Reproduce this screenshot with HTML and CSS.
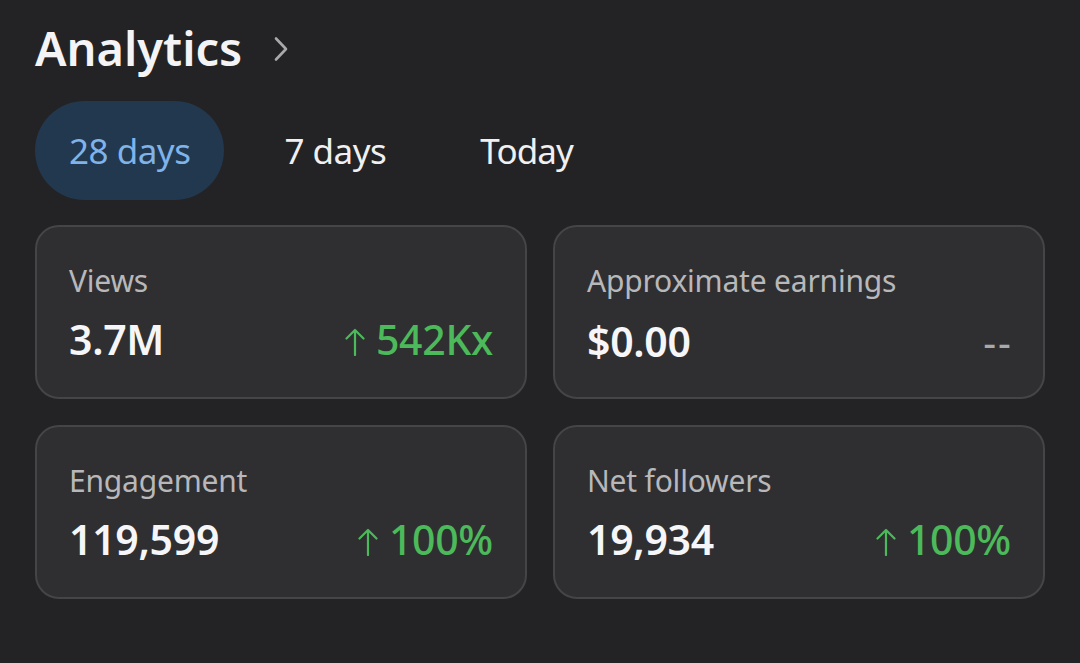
FILE: index.html
```html
<!DOCTYPE html>
<html lang="en">
<head>
<meta charset="utf-8">
<title>Analytics</title>
<link rel="stylesheet" href="styles.css">
</head>
<body>
<main class="panel">
  <header class="head">
    <h1 class="title">Analytics</h1>
    <svg class="chev" width="16" height="26" viewBox="0 0 16 26"><path d="M3 2.5 L13 13 L3 23.5" fill="none" stroke="#a9a9ad" stroke-width="2.6" stroke-linecap="round" stroke-linejoin="round"/></svg>
  </header>
  <nav class="tabs">
    <span class="tab active">28 days</span>
    <span class="tab">7 days</span>
    <span class="tab">Today</span>
  </nav>
  <section class="grid">
    <div class="card">
      <div class="label">Views</div>
      <div class="row"><span class="value">3.7M</span><span class="delta"><svg class="arrow" width="20" height="28" viewBox="0 0 20 28"><path d="M10 27 V2 M1.5 10.5 L10 2 L18.5 10.5" fill="none" stroke="#4cb95a" stroke-width="2.2" stroke-linecap="round" stroke-linejoin="round"/></svg>542Kx</span></div>
    </div>
    <div class="card">
      <div class="label">Approximate earnings</div>
      <div class="row"><span class="value">$0.00</span><span class="dash">--</span></div>
    </div>
    <div class="card">
      <div class="label">Engagement</div>
      <div class="row"><span class="value">119,599</span><span class="delta"><svg class="arrow" width="20" height="28" viewBox="0 0 20 28"><path d="M10 27 V2 M1.5 10.5 L10 2 L18.5 10.5" fill="none" stroke="#4cb95a" stroke-width="2.2" stroke-linecap="round" stroke-linejoin="round"/></svg>100%</span></div>
    </div>
    <div class="card">
      <div class="label">Net followers</div>
      <div class="row"><span class="value">19,934</span><span class="delta"><svg class="arrow" width="20" height="28" viewBox="0 0 20 28"><path d="M10 27 V2 M1.5 10.5 L10 2 L18.5 10.5" fill="none" stroke="#4cb95a" stroke-width="2.2" stroke-linecap="round" stroke-linejoin="round"/></svg>100%</span></div>
    </div>
  </section>
</main>
</body>
</html>
```
FILE: styles.css
```css
html, body {
  margin: 0;
  padding: 0;
  background: #232325;
}
body {
  font-family: "Noto Sans", "Open Sans", sans-serif;
  color: #f2f2f4;
}
.panel {
  padding: 17px 35px 0 35px;
}
.head {
  display: flex;
  align-items: center;
  gap: 31px;
  height: 62px;
}
.title {
  margin: 0;
  font-size: 47px;
  font-weight: 600;
  line-height: 62px;
  color: #f4f4f6;
  letter-spacing: 0;
}
.chev {
  display: block;
  margin-top: 1px;
}
.tabs {
  display: flex;
  gap: 26px;
  margin-top: 22px;
}
.tab {
  display: flex;
  align-items: center;
  height: 99px;
  padding: 0 34px;
  border-radius: 50px;
  font-size: 35px;
  color: #f0f0f2;
  letter-spacing: -0.5px;
}
.tab.active {
  background: #22384f;
  color: #7fb3ea;
}
.tab:last-child {
  letter-spacing: -0.9px;
}
.grid {
  display: grid;
  grid-template-columns: 492px 492px;
  gap: 26px;
  margin-top: 25px;
}
.card {
  box-sizing: border-box;
  height: 174px;
  border: 2px solid #454547;
  border-radius: 24px;
  background: #2f2f31;
  padding: 34px 32px 0 32px;
}
.label {
  font-size: 30px;
  line-height: 40px;
  color: #b8b8bb;
  letter-spacing: -0.2px;
}
.row {
  display: flex;
  justify-content: space-between;
  align-items: baseline;
  margin-top: 13px;
}
.value {
  font-size: 41px;
  font-weight: 600;
  line-height: 50px;
  color: #f6f6f8;
  letter-spacing: -0.3px;
}
.delta {
  font-size: 41px;
  font-weight: 500;
  line-height: 50px;
  color: #4cb95a;
  letter-spacing: -0.3px;
}
.arrow {
  display: inline-block;
  vertical-align: -1px;
  margin-right: 11px;
}
.dash {
  font-size: 40px;
  color: #a9a9ac;
  font-weight: 400;
  letter-spacing: 2px;
  margin-right: -2px;
}
```
